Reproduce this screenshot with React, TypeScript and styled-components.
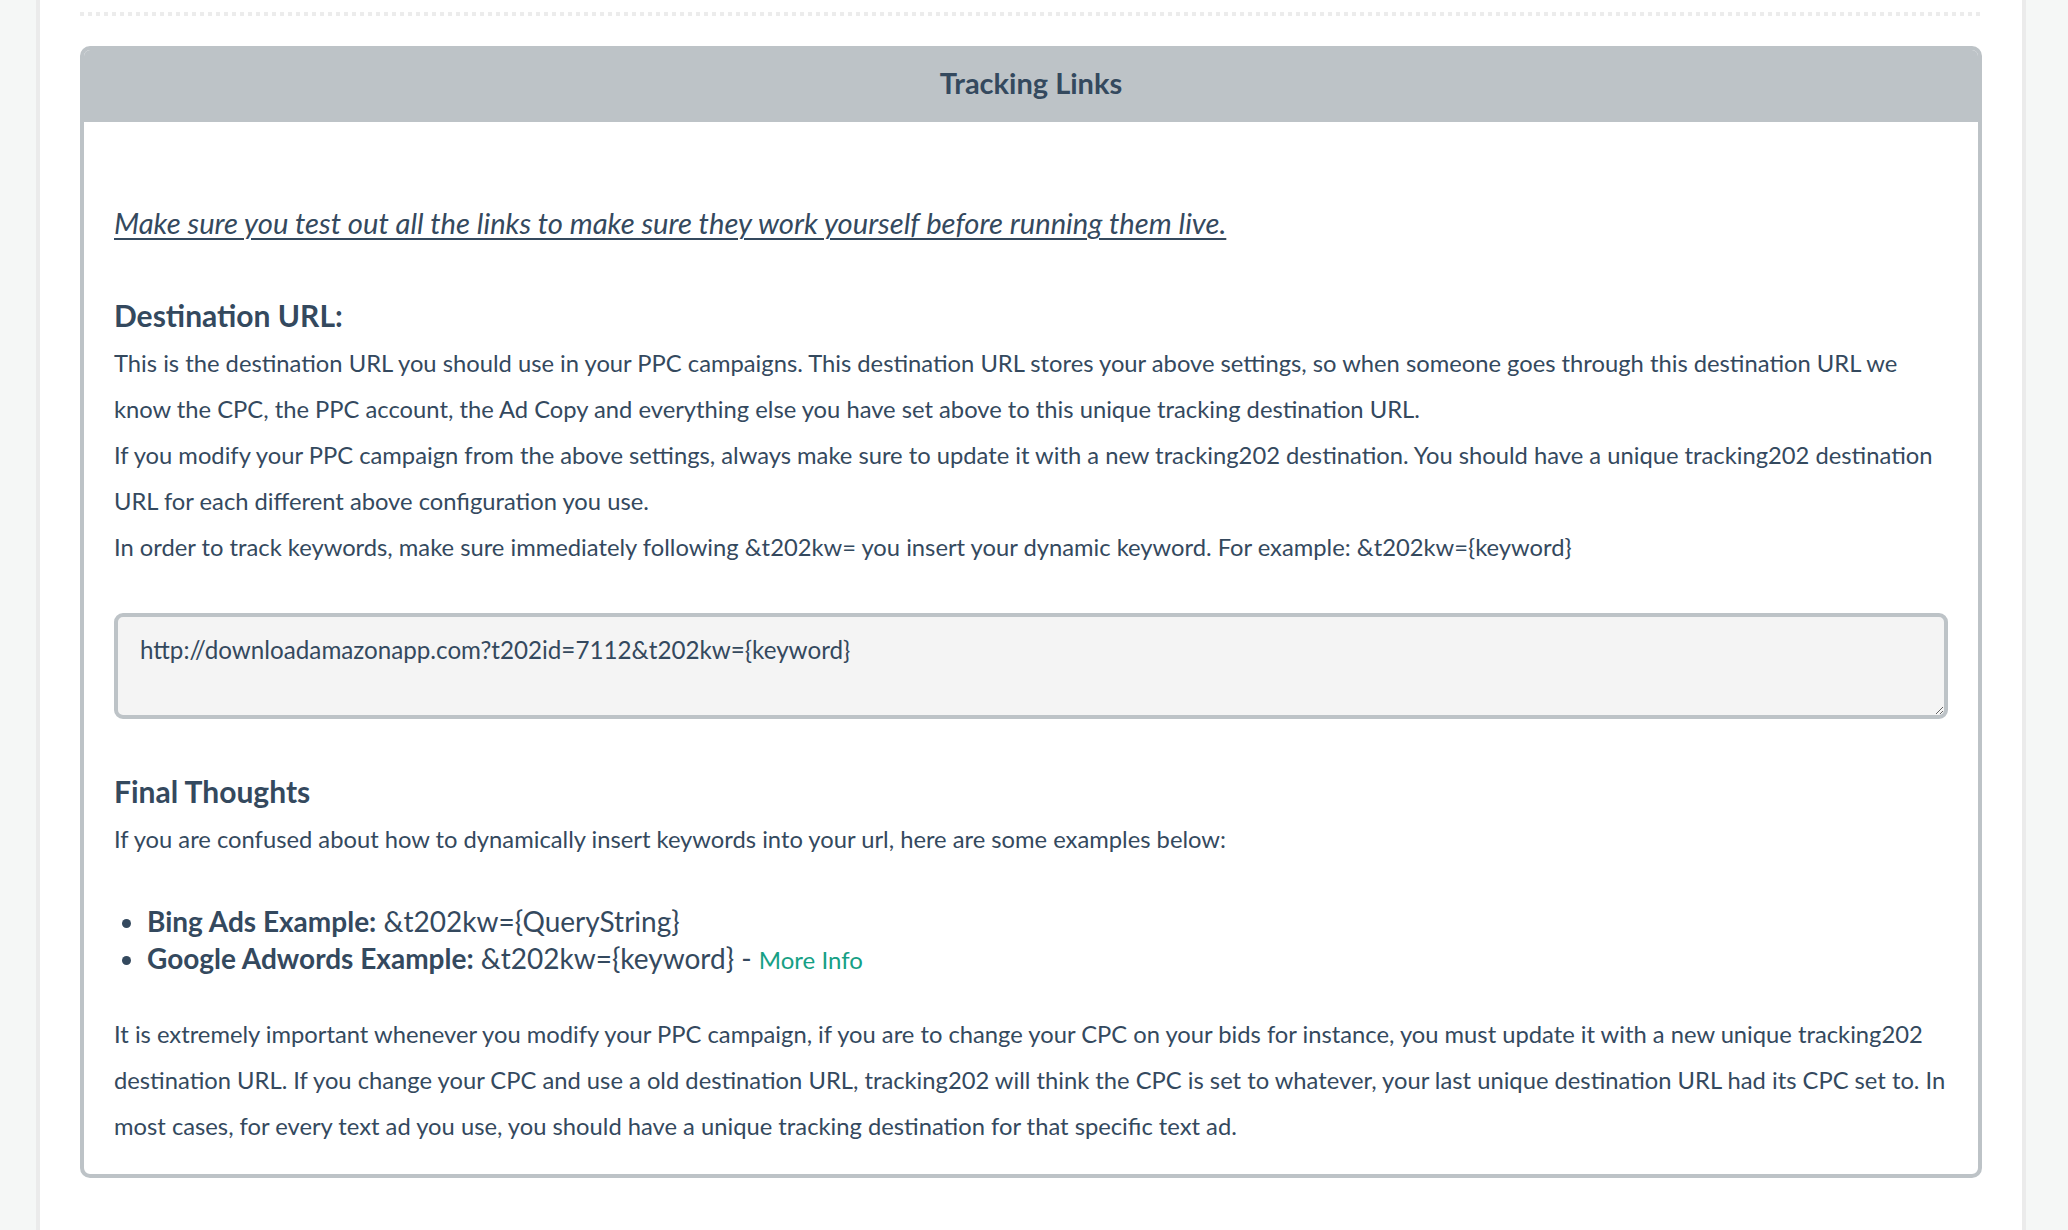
import React from "react";
import styled, { createGlobalStyle } from "styled-components";

const GlobalStyle = createGlobalStyle`
  html, body {
    margin: 0;
    padding: 0;
    background: #ffffff;
  }
  body {
    font-family: Lato, "Noto Sans", "Liberation Sans", sans-serif;
    color: #34495e;
  }
  * { box-sizing: border-box; }
`;

const Page = styled.div`
  display: flex;
  min-height: 100vh;
`;

const Rail = styled.div<{ $side: "left" | "right" }>`
  flex: 0 0 ${(p) => (p.$side === "left" ? "40px" : "46px")};
  background: #f5f7f6;
  ${(p) =>
    p.$side === "left"
      ? "border-right: 4px solid #ebebeb;"
      : "border-left: 4px solid #ebebeb;"}
`;

const Main = styled.main`
  flex: 1 1 auto;
  min-width: 0;
  background: #ffffff;
  padding: 12px 40px 50px;
`;

const DottedRule = styled.div`
  height: 4px;
  margin-bottom: 30px;
  background: repeating-linear-gradient(
    to right,
    #ececec 0,
    #ececec 4px,
    transparent 4px,
    transparent 8px
  );
`;

const Panel = styled.section`
  border: 4px solid #bdc3c7;
  border-radius: 10px;
  overflow: hidden;
  background: #ffffff;
`;

const PanelHeader = styled.header`
  background: #bdc3c7;
  height: 72px;
  margin: -4px -4px 0;
  padding: 4px 4px 0;
  box-sizing: content-box;
  text-align: center;
  font-weight: 700;
  font-size: 29px;
  line-height: 66px;
  color: #34495e;
`;

const PanelBody = styled.div`
  padding: 0 30px 25.5px;
`;

const Warning = styled.p`
  margin: 78px 0 0;
  font-size: 29.2px;
  font-style: italic;
  line-height: 46px;
  text-decoration: underline;
  text-decoration-thickness: 2px;
  text-underline-offset: 4px;
`;

const Heading = styled.h4<{ $gap: number }>`
  margin: ${(p) => p.$gap}px 0 8px;
  font-size: 30px;
  font-weight: 700;
  line-height: 34px;
`;

const Text = styled.p<{ $gap?: number }>`
  margin: ${(p) => p.$gap ?? 0}px 0 0;
  font-size: 23.75px;
  line-height: 46px;
`;

const UrlBox = styled.textarea`
  display: block;
  width: 100%;
  height: 106px;
  margin-top: 43px;
  padding: 18px 22px;
  border: 4px solid #bdc3c7;
  border-radius: 9px;
  background: #f4f4f4;
  font-family: Lato, "Noto Sans", sans-serif;
  font-size: 24.2px;
  line-height: 29px;
  color: #34495e;
  resize: vertical;
  outline: none;
`;

const Examples = styled.ul`
  margin: 41px 0 0;
  padding-left: 33px;
  font-size: 28px;
  line-height: 37px;
`;

const Example = styled.li`
  & > strong {
    font-weight: 700;
  }
`;

const MoreInfo = styled.a`
  color: #16a085;
  text-decoration: none;
  font-size: 24px;
`;

export default function App() {
  return (
    <>
      <GlobalStyle />
      <Page>
        <Rail $side="left" />
        <Main>
          <DottedRule />
          <Panel>
            <PanelHeader>Tracking Links</PanelHeader>
            <PanelBody>
              <Warning>
                Make sure you test out all the links to make sure they work yourself before running them live.
              </Warning>

              <Heading $gap={52}>Destination URL:</Heading>
              <Text>
                This is the destination URL you should use in your PPC campaigns. This destination URL stores your
                above settings, so when someone goes through this destination URL we know the CPC, the PPC account, the
                Ad Copy and everything else you have set above to this unique tracking destination URL.
              </Text>
              <Text>
                If you modify your PPC campaign from the above settings, always make sure to update it with a new
                tracking202 destination. You should have a unique tracking202 destination URL for each different above
                configuration you use.
              </Text>
              <Text>
                In order to track keywords, make sure immediately following &amp;t202kw= you insert your dynamic
                keyword. For example: &amp;t202kw={"{keyword}"}
              </Text>

              <UrlBox readOnly value={"http://downloadamazonapp.com?t202id=7112&t202kw={keyword}"} />

              <Heading $gap={55}>Final Thoughts</Heading>
              <Text>
                If you are confused about how to dynamically insert keywords into your url, here are some examples
                below:
              </Text>

              <Examples>
                <Example>
                  <strong>Bing Ads Example:</strong> &amp;t202kw={"{QueryString}"}
                </Example>
                <Example>
                  <strong>Google Adwords Example:</strong> &amp;t202kw={"{keyword}"} -{" "}
                  <MoreInfo href="#">More Info</MoreInfo>
                </Example>
              </Examples>

              <Text $gap={32.5}>
                It is extremely important whenever you modify your PPC campaign, if you are to change your CPC on your
                bids for instance, you must update it with a new unique tracking202 destination URL. If you change your
                CPC and use a old destination URL, tracking202 will think the CPC is set to whatever, your last unique
                destination URL had its CPC set to. In most cases, for every text ad you use, you should have a unique
                tracking destination for that specific text ad.
              </Text>
            </PanelBody>
          </Panel>
        </Main>
        <Rail $side="right" />
      </Page>
    </>
  );
}
